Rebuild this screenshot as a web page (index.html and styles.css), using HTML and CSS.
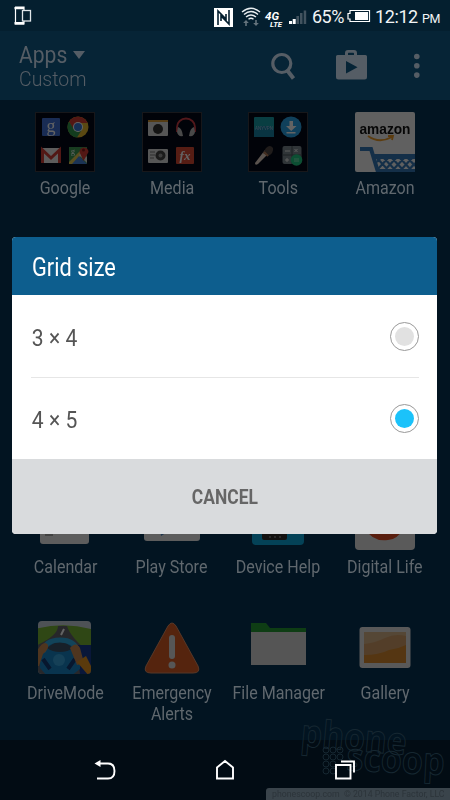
FILE: index.html
```html
<!DOCTYPE html>
<html lang="en">
<head>
    <meta charset="utf-8">
    <title>Apps</title>
    <link rel="stylesheet" href="styles.css">
</head>
<body>
<div class="phone">
    <div class="status-bar">
        <svg class="status-left" width="18" height="20" viewBox="0 0 18 20">
            <path d="M1 1h9v4M1.500 1v17H10v-3" fill="none" stroke="#fff" stroke-width="1.200"/>
            <path d="M.5 1h9.500v2.200H.5zM.5 16h9.500v2.500H.5z" fill="#fff"/>
            <rect x="8.500" y="4.500" width="8" height="10.500" fill="#041f2f" stroke="#dfe5e8" stroke-width="1.300"/>
        </svg>
        <svg class="status-icons" width="98" height="24" viewBox="210 4 98 24">
            <rect x="214" y="7" width="19" height="19" fill="#fff"/>
            <path d="M218 24V10l8 8v-5M229 9v14l-8-8v5" fill="none" stroke="#041f2f" stroke-width="1.600"/>
            <g fill="none" stroke="#e8edf0" stroke-width="1.400">
                <path d="M242 11q9-7.500 18 0M244 13.500q7-6 14 0M246 16q5-4 10 0M248.500 18.200q2.500-2 5 0"/>
            </g>
            <path d="M246 19l2.800 3h-2v3h-1.600v-3h-2zM256 25l-2.800-3h2v-3h1.600v3h2z" fill="#65747d"/>
            <text x="265" y="18.500" class="net-4g" textLength="14" lengthAdjust="spacingAndGlyphs">4G</text>
            <text x="270" y="26" class="net-lte" textLength="12" lengthAdjust="spacingAndGlyphs">LTE</text>
            <path d="M289 20h3v3h-3zM292.700 18h3v5h-3z" fill="#fff"/>
            <path d="M296.400 15h2.600v8h-2.600zM300 12h2.500v11H300zM303.700 9.500h2.500V23h-2.500z" fill="#42535f"/>
        </svg>
        <span class="percent">65%</span>
        <svg class="battery" width="24" height="14" viewBox="0 0 24 14">
            <path d="M3 1.500h19.500v11H3V10H1V4.500h2z" fill="none" stroke="#fff" stroke-width="1.200"/>
            <path d="M8 3h13v8H8z" fill="#fff"/>
        </svg>
        <span class="clock">12:12</span><span class="pm">PM</span>
    </div>

    <div class="app-bar">
        <div class="titles">
            <div class="title"><span>Apps</span><i class="caret"></i></div>
            <div class="subtitle">Custom</div>
        </div>
        <svg class="actions" width="166" height="36" viewBox="264 48 166 36">
            <g fill="#555d65">
                <path d="M336 55h9v-2q0-3 3-3h6q3 0 3 3v2h8.500q1.500 0 1.500 1.500V77q0 2.500-2.500 2.500h-26q-2.500 0-2.500-2.500V56.500q0-1.500 1.500-1.500zM348 55h6v-1.500q0-.7-.7-.7h-4.600q-.7 0-.7.7zM346 61v12.500l11.500-6.200z" fill-rule="evenodd"/>
                <circle cx="416.800" cy="56.500" r="2.800"/>
                <circle cx="416.800" cy="65.800" r="2.800"/>
                <circle cx="416.800" cy="75.100" r="2.800"/>
            </g>
            <circle cx="281.800" cy="63.500" r="9" fill="none" stroke="#555d65" stroke-width="3.200"/>
            <path d="M287 70l6.500 8.500" stroke="#555d65" stroke-width="4"/>
        </svg>
    </div>

    <div class="apps">
        <div class="app">
            <svg class="icon" viewBox="0 0 60 60">
                <rect x=".5" y=".5" width="59" height="59" class="folder"/>
                <rect x="7" y="6" width="18" height="18" rx="1" fill="#3f70d8"/>
                <text x="16" y="20" class="g-letter">g</text>
                <circle cx="43" cy="15" r="10.500" fill="#e8b92d"/>
                <path d="M34 9.500A10.500 10.500 0 0 1 52.500 11H43l-4.500 7z" fill="#d33c31"/>
                <path d="M34 9.500A10.500 10.500 0 0 0 42 25.500l5-8-8 0z" fill="#31994c"/>
                <circle cx="43" cy="15" r="5" fill="#fff"/><circle cx="43" cy="15" r="4" fill="#3979d8"/>
                <rect x="6" y="36" width="20" height="15" rx="1" fill="#eee"/>
                <path d="M7.500 51V38L16 46l8.500-8v13" fill="none" stroke="#d23e36" stroke-width="3"/>
                <rect x="34" y="35" width="18" height="17" fill="#3d9b53"/>
                <path d="M34 50l12-12 3 3-11 11h-4z" fill="#e7ca50"/>
                <path d="M37 52l7-8 8 8z" fill="#4484da"/>
                <path d="M44 43l8 8v-6l-5-5z" fill="#ddd"/>
                <text x="38" y="42" class="g-small">g</text>
                <path d="M48.500 49l-4-9a4.500 4.500 0 1 1 9 0z" fill="#d63b32"/><circle cx="48.500" cy="38" r="1.500" fill="#801c18"/>
            </svg>
            <span class="label">Google</span>
        </div>
        <div class="app">
            <svg class="icon" viewBox="0 0 60 60">
                <rect x=".5" y=".5" width="59" height="59" class="folder"/>
                <rect x="6" y="8" width="20" height="16" rx="1" fill="#ddd"/>
                <path d="M6 8h20v2H6z" fill="#d79a36"/>
                <circle cx="16" cy="17" r="5" fill="#343434"/>
                <path d="M35 20V15a9 8.500 0 0 1 18 0v5" fill="none" stroke="#d33d46" stroke-width="1.800"/>
                <path d="M36 15q4 1 5 9-5 1-6-4zM52 15q-4 1-5 9 5 1 6-4z" fill="#bbb"/>
                <rect x="6" y="37" width="20" height="14" rx="1" fill="#ddd"/>
                <path d="M8 40h5M8 43h5M8 46h4" stroke="#777"/>
                <circle cx="18.500" cy="43.500" r="5" fill="#454545"/><circle cx="18.500" cy="43.500" r="2" fill="#999"/>
                <rect x="34" y="35" width="18" height="17" rx="1" fill="#dc4b34"/>
                <text x="43" y="48" class="fx">fx</text>
            </svg>
            <span class="label">Media</span>
        </div>
        <div class="app">
            <svg class="icon" viewBox="0 0 60 60">
                <rect x=".5" y=".5" width="59" height="59" class="folder"/>
                <rect x="6" y="5" width="20" height="20" rx="1" fill="#16a0aa"/>
                <path d="M6 18q10-8 20-1v8H6z" fill="#1685a8"/>
                <text x="7" y="18" class="vpn" textLength="18" lengthAdjust="spacingAndGlyphs">ANYVPN</text>
                <circle cx="43" cy="15" r="10.500" fill="#29a5ea"/>
                <path d="M41.500 9h3.500v5h3.500L43.200 19 38 14h3.500zM38.500 20h9v1.500h-9z" fill="#fff"/>
                <path d="M7 51l10-13 4 3-11 11q-3 2-3-1z" fill="#e8d5c8"/>
                <path d="M15 41l3-5q4-4 7 0 1 5-5 8z" fill="#514844"/>
                <path d="M16 40l4 4" stroke="#b47b58" stroke-width="2"/>
                <rect x="34.500" y="34" width="19" height="18" rx="2" fill="#7b8790"/>
                <path d="M44 34v18M34.500 43h19" stroke="#4a5359"/>
                <path d="M37 39h5M37 48h4M39 46v4M46.500 37l3 3M49.500 37l-3 3" stroke="#eee"/>
                <circle cx="48.500" cy="48" r="5.800" fill="#20ca82"/><path d="M46 47h5M46 49h5" stroke="#87ebbc"/>
            </svg>
            <span class="label">Tools</span>
        </div>
        <div class="app">
            <svg class="icon" viewBox="0 0 60 60">
                <rect width="60" height="60" rx="2" fill="#f5f5f5"/>
                <text x="4.500" y="22" class="amazon" textLength="51" lengthAdjust="spacingAndGlyphs">amazon</text>
                <path d="M13 24q11 8 24 1M33 24h5l-1 4" fill="none" stroke="#ed9b26" stroke-width="1.800"/>
                <path d="M5 37h11l7 23" fill="none" stroke="#3379b9" stroke-width="4"/>
                <path d="M19 42h41v5H20z" fill="#3379b9"/>
                <path d="M22 57h38v3H23z" fill="#3379b9"/>
                <path d="M20 44l15 16M27 44l15 16M35 44l15 16M43 44l15 16M51 44l9 10M27 44l-5 6M35 44L22 58M43 44L28 60M51 44L36 60M59 44L44 60M60 51l-8 9" stroke="#3379b9" stroke-width="2.200"/>
            </svg>
            <span class="label">Amazon</span>
        </div>

        <div class="app row-four">
            <svg class="icon" viewBox="0 0 60 60"><rect x="5" y="2" width="49" height="51" rx="3" fill="#eee"/><path d="M10 36h8v9h-8z" fill="#aaa"/></svg>
            <span class="label">Calendar</span>
        </div>
        <div class="app row-four">
            <svg class="icon" viewBox="0 0 60 60"><rect x="2" y="2" width="56" height="48" rx="3" fill="#eee"/><path d="M17 30l10-5v15l-8 5z" fill="#4b87c6"/></svg>
            <span class="label">Play Store</span>
        </div>
        <div class="app row-four">
            <svg class="icon" viewBox="0 0 60 60"><rect x="4" y="2" width="52" height="52" rx="4" fill="#09aadf"/><rect x="14" y="8" width="25" height="41" rx="2" fill="#302c29"/><path d="M16 10h21v33H16z" fill="#dda16b"/><path d="M21 46h2M26 46h2M31 46h2" stroke="#aaa"/></svg>
            <span class="label">Device Help</span>
        </div>
        <div class="app row-four">
            <svg class="icon" viewBox="0 0 60 60"><rect width="60" height="59" rx="4" fill="#e8e8e8"/><path d="M11 38h37q-6 11-15 11-16 2-22-11z" fill="#e34e24"/></svg>
            <span class="label">Digital Life</span>
        </div>

        <div class="app row-five">
            <svg class="icon" viewBox="0 0 60 60">
                <clipPath id="drive"><rect x="3" y="4" width="53" height="53" rx="4"/></clipPath>
                <g clip-path="url(#drive)">
                    <path d="M0 0h60v60H0z" fill="#c9d3dd"/>
                    <path d="M0 12q30-8 60 1v22H0z" fill="#78b735"/>
                    <path d="M0 29Q23 19 23 9h9Q36 22 60 40v20H0z" fill="#65646b"/>
                    <path d="M29 12l-3 6" stroke="#fff" stroke-width="2"/>
                    <path d="M41 28h19v29H45z" fill="#183c91"/>
                    <path d="M5 51V37q3-15 20-16 17 1 20 16v15l-9 7H12z" fill="#1786c8"/>
                    <path d="M12 31q13-12 26 0-5 4-13 4t-13-4z" fill="#3b536a"/>
                    <path d="M8 35q2-12 17-12t18 12" fill="none" stroke="#2eabe3" stroke-width="5"/>
                    <circle cx="24" cy="43" r="6" fill="#35a4de"/>
                    <path d="M8 42l7 10M40 42l-7 10" stroke="#123a75" stroke-width="4"/>
                    <path d="M2 34q7-12 11-6 1 4-5 9l-4 12H0zM35 31q6-7 10 0l4 15-7 2z" fill="#c98750"/>
                    <path d="M42 45l9-6 7 14-4 6z" fill="#e89420"/>
                </g>
            </svg>
            <span class="label">DriveMode</span>
        </div>
        <div class="app row-five">
            <svg class="icon" viewBox="0 0 60 60">
                <path d="M26 9q4-6 8 0l22 40q3 7-5 7H9q-8 0-5-7z" fill="#d95c24" stroke="#dd8d64"/>
                <rect x="27" y="18" width="6" height="24" rx="3" fill="#ddd"/><circle cx="30" cy="48" r="3.500" fill="#ddd"/>
            </svg>
            <span class="label">Emergency</span><span class="label second">Alerts</span>
        </div>
        <div class="app row-five">
            <svg class="icon" viewBox="0 0 60 60">
                <path d="M3 6h15l4 5h36v5H3z" fill="#259c32"/><path d="M3 15h55v33H3z" fill="#dadada"/>
            </svg>
            <span class="label">File Manager</span>
        </div>
        <div class="app row-five">
            <svg class="icon" viewBox="0 0 60 60">
                <rect x="4.500" y="10" width="51" height="41" rx="3" fill="#e4e4e4"/>
                <path d="M9 15h42v31H9z" fill="#dab58b"/><path d="M9 27q11-1 21-6t21-2v27H9z" fill="#d4a069"/><path d="M9 38q15 0 25-5 9-1 17-5v18H9z" fill="#d98b2d"/>
            </svg>
            <span class="label">Gallery</span>
        </div>
    </div>

    <div class="nav-bar">
        <svg width="280" height="30" viewBox="85 755 280 30" fill="none" stroke="#fff" stroke-width="1.900">
            <path d="M98 763.500h10q6.500 0 6.500 7.500t-6.500 7.500H97"/>
            <path d="M94.500 763.500l6-3.500v7z" fill="#fff" stroke="none"/>
            <path d="M217 778.500V767.500l8-6.500 8 6.500v11z"/>
            <path d="M336 765h14.500v13.500H336zM341 761.500h13v11"/>
        </svg>
    </div>

    <svg class="watermark" width="155" height="85" viewBox="295 700 155 85">
        <text x="300" y="746" transform="rotate(5 300 746)" textLength="106" lengthAdjust="spacingAndGlyphs">phone</text>
        <text x="346" y="770" transform="rotate(3 346 770)" textLength="98" lengthAdjust="spacingAndGlyphs">scoop</text>
        <g fill="none" stroke="#162731">
            <circle cx="326" cy="750" r="3"/><circle cx="333" cy="750" r="3"/><circle cx="340" cy="750" r="3"/>
            <circle cx="326" cy="757" r="3"/><circle cx="333" cy="757" r="3"/><circle cx="340" cy="757" r="3"/>
            <circle cx="326" cy="764" r="3"/><circle cx="333" cy="764" r="3"/>
            <circle cx="326" cy="771" r="3"/><circle cx="333" cy="771" r="3"/>
        </g>
    </svg>
    <div class="credit"><span>phonescoop.com&nbsp;&nbsp;© 2014 Phone Factor, LLC</span></div>

    <div class="dialog">
        <div class="dialog-title"><span>Grid size</span></div>
        <div class="options">
            <div class="option"><span>3 × 4</span><i class="radio"></i></div>
            <div class="option"><span>4 × 5</span><i class="radio checked"></i></div>
        </div>
        <div class="cancel"><span>CANCEL</span></div>
    </div>
</div>
</body>
</html>
```

FILE: styles.css
```css
* {
    box-sizing: border-box;
}

body {
    margin: 0;
    font-family: Roboto, sans-serif;
}

.phone {
    position: relative;
    width: 450px;
    height: 800px;
    overflow: hidden;
    display: flex;
    flex-direction: column;
    background: #021421;
}

.status-bar {
    height: 31px;
    display: flex;
    align-items: center;
    padding: 2px 9px 0 14px;
    background: #041f2f;
    color: #f2f4f5;
}

.status-bar > * {
    flex-shrink: 0;
}

.status-left {
    margin-top: -2px;
}

.status-icons {
    margin-left: 178px;
}

.percent {
    width: 35px;
    margin-left: 4px;
    font-size: 18px;
    letter-spacing: -0.5px;
}

.battery {
    margin-top: -1px;
}

.clock {
    margin-left: 4px;
    width: 44px;
    font-size: 18px;
    letter-spacing: -0.4px;
}

.pm {
    margin-left: 3px;
    padding-top: 3px;
    font-size: 12.500px;
    letter-spacing: -0.5px;
}

.net-4g {
    fill: #fff;
    font: italic bold 11px Roboto, sans-serif;
}

.net-lte {
    fill: #fff;
    font: italic bold 6.500px Roboto, sans-serif;
}

.app-bar {
    height: 69px;
    display: flex;
    justify-content: space-between;
    padding: 10px 20px 0 19px;
    background: #062436;
    color: #555d65;
}

.title {
    display: flex;
    align-items: center;
    height: 26px;
    font-size: 24.500px;
}

.title span {
    width: 48px;
    transform: scaleX(.86);
    transform-origin: left;
}

.caret {
    margin: 2px 0 0 6px;
    border: 6px solid transparent;
    border-top: 8px solid #555d65;
    border-bottom: 0;
}

.subtitle {
    line-height: 25px;
    font-size: 20.500px;
    font-weight: 300;
    transform: scaleX(.95);
    transform-origin: left;
}

.actions {
    margin-top: 7px;
}

.apps {
    height: 640px;
    padding: 12px 12px 0;
    display: grid;
    grid-template-columns: repeat(4, minmax(0, 1fr));
    grid-auto-rows: 126.300px;
}

.app {
    display: flex;
    flex-direction: column;
    align-items: center;
}

.row-four {
    grid-row: 4;
}

.row-five {
    grid-row: 5;
}

.icon {
    width: 60px;
    height: 60px;
    flex-shrink: 0;
    filter: brightness(.39);
}

.folder {
    fill: #030817;
    stroke: #3a3c42;
}

.g-letter {
    fill: #fff;
    font: 18px "Liberation Serif", serif;
    text-anchor: middle;
}

.g-small {
    fill: #fff;
    font: 8px "Liberation Serif", serif;
    text-anchor: middle;
}

.fx {
    fill: #fff;
    font: italic bold 13px "Liberation Serif", serif;
    text-anchor: middle;
}

.vpn {
    fill: #9bd;
    font-size: 6px;
}

.amazon {
    fill: #111;
    font: bold 15px "Liberation Sans", sans-serif;
}

.label {
    margin-top: 5px;
    line-height: 21px;
    font-size: 19px;
    white-space: nowrap;
    color: #60686e;
    transform: scaleX(.845);
}

.second {
    margin-top: 0;
}

.nav-bar {
    height: 60px;
    display: flex;
    justify-content: center;
    padding-top: 15px;
    background: #020c14;
}

.nav-bar svg {
    position: relative;
    z-index: 1;
}

.watermark {
    position: absolute;
    left: 295px;
    top: 700px;
    overflow: visible;
}

.watermark text {
    fill: none;
    stroke: #162731;
    font: bold 38px "Open Sans", sans-serif;
}

.credit {
    position: absolute;
    left: 266px;
    bottom: 0;
    width: 184px;
    height: 12px;
    padding-left: 6px;
    border-radius: 3px 0 0 0;
    background: #3a444b;
    color: #2c343a;
    font-size: 9px;
    line-height: 12px;
    white-space: nowrap;
}

.credit span {
    display: inline-block;
    transform: scaleX(.97);
    transform-origin: left;
}

.dialog {
    position: absolute;
    z-index: 2;
    left: 12px;
    top: 237px;
    width: 425px;
    height: 297px;
    border-radius: 4px;
    overflow: hidden;
    background: #fff;
}

.dialog-title {
    height: 58px;
    padding: 1px 20px 0;
    line-height: 60px;
    background: #0d5e8e;
    color: #fff;
    font-size: 25px;
}

.dialog-title span {
    display: inline-block;
    transform: scaleX(.87);
    transform-origin: left;
}

.options {
    padding: 0 18px 0 19px;
}

.option {
    height: 82px;
    display: flex;
    align-items: center;
    justify-content: space-between;
    color: #555;
    font-size: 24.500px;
}

.option + .option {
    border-top: 1px solid #e6e6e6;
}

.option span {
    padding: 2px 0 0 1px;
    transform: scaleX(.86);
    transform-origin: left;
}

.radio {
    width: 29px;
    height: 29px;
    display: flex;
    align-items: center;
    justify-content: center;
    border: 1px solid #999;
    border-radius: 50%;
}

.radio::before {
    content: "";
    width: 19px;
    height: 19px;
    border-radius: 50%;
    background: #e1e1e1;
}

.radio.checked::before {
    background: #1bc2fa;
}

.cancel {
    height: 75px;
    line-height: 76px;
    text-align: center;
    background: #d9dbdd;
    color: #666;
    font-size: 20.500px;
    font-weight: bold;
}

.cancel span {
    display: inline-block;
    transform: scaleX(.85);
}
```
